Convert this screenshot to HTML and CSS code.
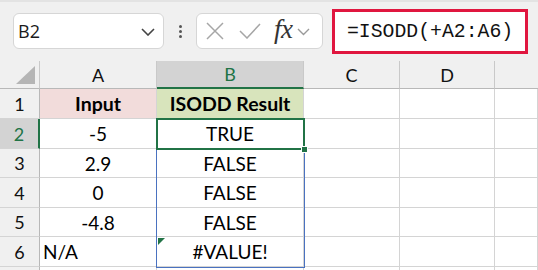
FILE: index.html
```html
<!DOCTYPE html>
<html>
<head>
<meta charset="utf-8">
<link rel="stylesheet" href="styles.css">
</head>
<body>
<div class="app">
  <div class="toolbar">
    <div class="namebox">
      <span class="name">B2</span>
      <svg class="chev" width="14" height="8" viewBox="0 0 14 8"><polyline points="1,1 7,7 13,1" fill="none" stroke="#444" stroke-width="1.6"/></svg>
    </div>
    <div class="dots"><i></i><i></i><i></i></div>
    <div class="fnbox">
      <svg class="ico" width="18" height="18" viewBox="0 0 18 18"><path d="M1 1 L17 17 M17 1 L1 17" stroke="#a6a6a6" stroke-width="1.5" fill="none"/></svg>
      <svg class="ico" width="22" height="16" viewBox="0 0 22 16"><polyline points="1,8 8,15 21,1" stroke="#a6a6a6" stroke-width="1.5" fill="none"/></svg>
      <span class="fx">fx</span>
      <svg class="chev2" width="13" height="8" viewBox="0 0 13 8"><polyline points="1,1 6.5,6.5 12,1" fill="none" stroke="#9a9a9a" stroke-width="1.4"/></svg>
    </div>
    <div class="formula">=ISODD(+A2:A6)</div>
  </div>
  <div class="sheet">
    <div class="grid">
      <div class="ch corner"><span class="tri"></span></div>
      <div class="ch">A</div>
      <div class="ch sel">B</div>
      <div class="ch">C</div>
      <div class="ch">D</div>
      <div class="ch last"></div>

      <div class="rh">1</div>
      <div class="c center bold pink">Input</div>
      <div class="c center bold green">ISODD Result</div>
      <div class="c"></div><div class="c"></div><div class="c"></div>

      <div class="rh rsel">2</div>
      <div class="c center">-5</div>
      <div class="c center">TRUE</div>
      <div class="c"></div><div class="c"></div><div class="c"></div>

      <div class="rh">3</div>
      <div class="c center">2.9</div>
      <div class="c center">FALSE</div>
      <div class="c"></div><div class="c"></div><div class="c"></div>

      <div class="rh">4</div>
      <div class="c center">0</div>
      <div class="c center">FALSE</div>
      <div class="c"></div><div class="c"></div><div class="c"></div>

      <div class="rh">5</div>
      <div class="c center">-4.8</div>
      <div class="c center">FALSE</div>
      <div class="c"></div><div class="c"></div><div class="c"></div>

      <div class="rh">6</div>
      <div class="c left">N/A</div>
      <div class="c center err">#VALUE!</div>
      <div class="c"></div><div class="c"></div><div class="c"></div>

      <div class="rh"></div>
      <div class="c"></div><div class="c"></div><div class="c"></div><div class="c"></div><div class="c"></div>
    </div>
    <div class="spill"></div>
    <div class="selbox"></div>
    <div class="handle"></div>
  </div>
</div>
</body>
</html>
```
FILE: styles.css
```css
* { box-sizing: border-box; }
html, body { margin: 0; padding: 0; }
body { width: 538px; height: 270px; overflow: hidden; background: #fff; }
.app { width: 538px; height: 270px; display: flex; flex-direction: column; overflow: hidden; }

.toolbar {
  height: 61px;
  background: #f0f0f0;
  border-top: 2px solid #e3e3e3;
  display: flex;
  align-items: flex-start;
  padding: 11px 0 0 13px;
  flex: none;
}
.namebox {
  width: 151px; height: 36px;
  background: #fff;
  border: 1px solid #d6d6d6;
  border-radius: 6px;
  display: flex; align-items: center; justify-content: space-between;
  padding: 0 8px 0 4px;
}
.name { font-family: "Open Sans", sans-serif; font-size: 18px; color: #1a1a1a; }
.chev { margin-top: 1px; }
.dots { width: 32px; height: 36px; display: flex; flex-direction: column; align-items: center; justify-content: center; gap: 2px; }
.dots i { display: block; width: 3px; height: 3px; background: #555; border-radius: 50%; }
.fnbox {
  width: 127px; height: 36px;
  background: #fff;
  border: 1px solid #d6d6d6;
  border-radius: 6px;
  display: flex; align-items: center;
  padding: 0 0 0 9px;
}
.fnbox .ico:nth-child(1) { margin-right: 15px; }
.fnbox .ico:nth-child(2) { margin-right: 13px; }
.fx { font-family: "Liberation Serif", serif; font-style: italic; font-size: 27px; color: #333; line-height: 1; margin-top: -4px; letter-spacing: -0.5px; }
.chev2 { margin-left: 4px; margin-top: 2px; }
.formula {
  margin-left: 9px;
  margin-top: -4px;
  width: 196px; height: 45px;
  background: #fff;
  border: 3px solid #e0163f;
  font-family: "Liberation Mono", monospace;
  font-size: 19.8px;
  color: #111;
  display: flex; align-items: center;
  padding-left: 12px;
}

.sheet { position: relative; flex: 1; background: #fff; overflow: hidden; }
.grid {
  display: grid;
  grid-template-columns: 40px 117px 147px 96px 95px 43px;
  grid-template-rows: 28px 30px 30px 29px 30px 29px 30px 30px;
}
.ch {
  background: #f0f0f0;
  border-right: 1px solid #c9c9c9;
  border-bottom: 1px solid #b8b8b8;
  font-family: "Lato", sans-serif;
  font-size: 18px;
  color: #111;
  display: flex; align-items: center; justify-content: center;
}
.ch.last { border-right: none; }
.ch.sel { background: #d3d3d3; color: #217346; border-bottom: 2px solid #217346; }
.corner { position: relative; }
.tri {
  position: absolute; left: 16px; top: 5px;
  width: 0; height: 0;
  border-left: 19px solid transparent;
  border-bottom: 18px solid #b5b5b5;
}
.rh {
  background: #f0f0f0;
  border-right: 1px solid #b8b8b8;
  border-bottom: 1px solid #d4d4d4;
  font-family: "Lato", sans-serif;
  font-size: 18px;
  color: #111;
  display: flex; align-items: center; justify-content: center;
}
.rh.rsel { background: #d3d3d3; color: #217346; border-right: 2px solid #217346; }
.c {
  border-right: 1px solid #d4d4d4;
  border-bottom: 1px solid #d4d4d4;
  font-family: "Lato", sans-serif;
  font-size: 19px;
  color: #000;
  display: flex; align-items: center;
  position: relative;
}
.center { justify-content: center; }
.left { padding-left: 3px; }
.bold { font-weight: 700; font-size: 19.5px; }
.pink { background: #f2dcdb; }
.green { background: #d8e4bc; }
.err::before {
  content: "";
  position: absolute; left: 1px; top: 1px;
  width: 0; height: 0;
  border-top: 7px solid #217346;
  border-right: 7px solid transparent;
}
.spill {
  position: absolute;
  left: 156px; top: 57px;
  width: 149px; height: 150px;
  border: 1.5px solid #4a72c0;
}
.selbox {
  position: absolute;
  left: 156px; top: 57px;
  width: 149px; height: 32px;
  border: 2px solid #217346;
}
.handle {
  position: absolute;
  left: 301px; top: 85px;
  width: 7px; height: 7px;
  background: #217346;
  border: 1px solid #fff;
}
```
